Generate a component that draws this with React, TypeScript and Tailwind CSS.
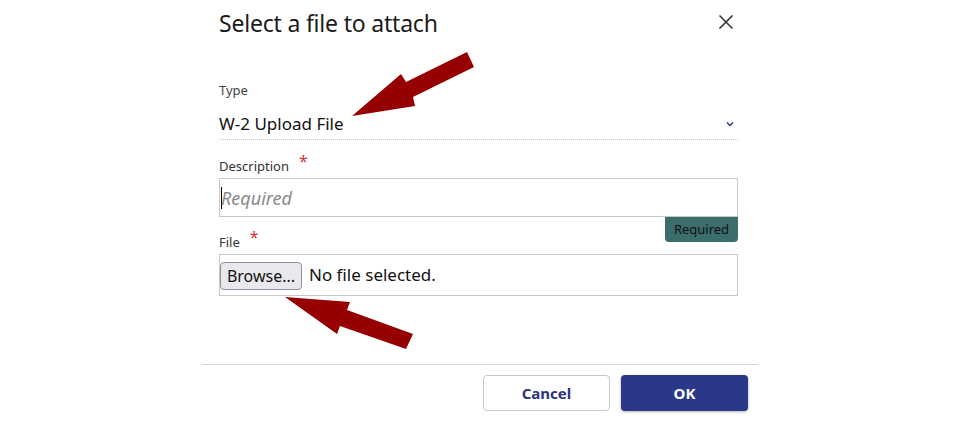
import React from 'react';

const font = { fontFamily: '"Noto Sans", "Open Sans", sans-serif' };

const Asterisk: React.FC = () => (
  <span className="ml-[10px] text-[16px] leading-none text-[#d13438] relative -top-[5px]">*</span>
);

const App: React.FC = () => {
  return (
    <div className="relative w-full h-[421px] bg-white overflow-hidden flex justify-center" style={font}>
      {/* Dialog */}
      <div className="w-[556px] flex flex-col">
        {/* Header */}
        <div className="flex items-center justify-between pl-[17px] pr-[20px] mt-[7px] h-[32px]">
          <h1 className="text-[23px] leading-[32px] text-[#1b1b1b] tracking-[-0.2px]">Select a file to attach</h1>
          <button className="w-[20px] h-[20px] flex items-center justify-center mr-[2px] -mt-[2px]">
            <svg width="16" height="16" viewBox="0 0 16 16">
              <path d="M1.5 1.5 L14.5 14.5 M14.5 1.5 L1.5 14.5" stroke="#333" strokeWidth="1.6" />
            </svg>
          </button>
        </div>

        {/* Body */}
        <div className="pl-[17px] pr-[20px] mt-[42px] flex flex-col">
          <label className="text-[13px] leading-[18px] text-[#444]">Type</label>
          <div className="mt-[9px] h-[32px] flex items-center justify-between border-b border-dotted border-[#c8c8c8]">
            <span className="text-[17px] leading-[24px] text-[#111]">W-2 Upload File</span>
            <svg width="10" height="8" viewBox="0 0 10 8" className="mr-[3px]">
              <path d="M2 2.5 L5 5.5 L8 2.5" fill="none" stroke="#2b3787" strokeWidth="1.4" />
            </svg>
          </div>

          <div className="mt-[17px] h-[18px] flex items-center">
            <label className="text-[13px] leading-[18px] text-[#333]">Description</label>
            <Asterisk />
          </div>
          <div className="relative mt-[3px]">
            <div className="h-[39px] border border-[#c8c8c8] flex items-center">
              <div className="w-px h-[22px] bg-black ml-px" />
              <span className="italic text-[18px] text-[#8a8a8a] -ml-px mt-[2px]">Required</span>
            </div>
            <div className="absolute right-0 top-[39px] w-[73px] h-[25px] bg-[#3a6d6c] rounded-b-[4px] flex items-center justify-center">
              <span className="text-[13px] text-[#111]">Required</span>
            </div>
          </div>

          <div className="mt-[16px] h-[18px] flex items-center">
            <label className="text-[13px] leading-[18px] text-[#333]">File</label>
            <Asterisk />
          </div>
          <div className="mt-[3px] h-[42px] border border-[#c8c8c8] flex items-center pl-0">
            <button className="h-[28px] w-[82px] mt-[1px] bg-[#e9e9ed] border border-[#8f8f9d] rounded-[4px] text-[16px] text-[#111] flex items-center justify-center">
              Browse...
            </button>
            <span className="ml-[7px] text-[17px] text-[#111]">No file selected.</span>
          </div>
        </div>

        {/* Footer */}
        <div className="mt-[68px] border-t border-[#d6d6d6] flex justify-end gap-[11px] pr-[10px] pt-[10px]">
          <button className="w-[127px] h-[36px] border border-[#c8c8c8] rounded-[4px] bg-white text-[15px] font-bold text-[#2b3480]">
            Cancel
          </button>
          <button className="w-[127px] h-[36px] rounded-[4px] bg-[#2b3787] text-[15px] font-bold text-white shadow-[0_1px_3px_rgba(0,0,0,0.3)]">
            OK
          </button>
        </div>
      </div>

      {/* Annotation arrows */}
      <svg className="absolute inset-0 pointer-events-none" width="960" height="421" viewBox="0 0 960 421">
        <polygon
          points="352,116 401,74 406,82 467,52 474,67 413,97 415,106"
          fill="#960000"
        />
        <polygon
          points="285,297 350,302 347,310 413,334 406,349 340,326 337,334"
          fill="#960000"
        />
      </svg>
    </div>
  );
};

export default App;
